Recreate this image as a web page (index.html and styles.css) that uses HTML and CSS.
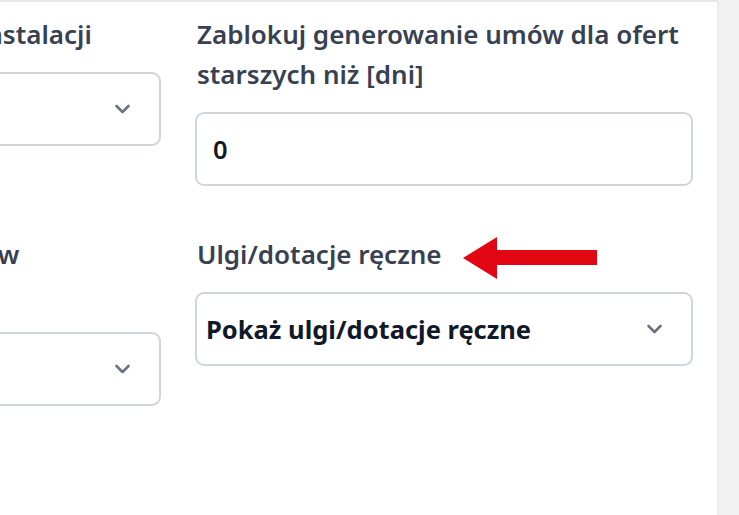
FILE: index.html
```html
<!DOCTYPE html>
<html lang="pl">
<head>
<meta charset="utf-8">
<link rel="stylesheet" href="styles.css">
</head>
<body>
<div class="page">
  <main class="panel">
    <form class="form-grid">
      <div class="field">
        <label class="label">Domyślne typy montażu instalacji</label>
        <div class="select"><span class="select-value"></span><svg class="chevron" viewBox="0 0 16 10"><path d="M2 2l6 6 6-6"/></svg></div>
      </div>
      <div class="field">
        <label class="label">Zablokuj generowanie umów dla ofert starszych niż [dni]</label>
        <div class="input">0</div>
      </div>
      <div class="field">
        <label class="label">Rabaty dla nowych klientów indywidualnych</label>
        <div class="select"><span class="select-value"></span><svg class="chevron" viewBox="0 0 16 10"><path d="M2 2l6 6 6-6"/></svg></div>
      </div>
      <div class="field">
        <div class="label-row">
          <label class="label">Ulgi/dotacje ręczne</label>
          <svg class="arrow" viewBox="0 0 134 42"><polygon points="0,21 34,0 34,13 134,13 134,28 34,28 34,42"/></svg>
        </div>
        <div class="select"><span class="select-value">Pokaż ulgi/dotacje ręczne</span><svg class="chevron" viewBox="0 0 16 10"><path d="M2 2l6 6 6-6"/></svg></div>
      </div>
    </form>
  </main>
  <aside class="side"></aside>
</div>
</body>
</html>
```
FILE: styles.css
```css
html, body {
  margin: 0;
  padding: 0;
  height: 100%;
}
body {
  background: #f1f1f1;
  font-family: "Noto Sans", "Open Sans", sans-serif;
  overflow: hidden;
}
.page {
  display: flex;
  height: 515px;
}
.panel {
  width: 718px;
  flex: none;
  background: #ffffff;
  border-top: 2px solid #e5e7eb;
  border-right: 1px solid #e5e7eb;
  overflow: hidden;
  box-sizing: border-box;
}
.side {
  flex: 1;
  background: #f1f1f1;
}
.form-grid {
  display: grid;
  grid-template-columns: 498px 498px;
  column-gap: 34px;
  row-gap: 48px;
  margin: 12px 0 0 -337px;
  align-items: start;
}
.field {
  display: flex;
  flex-direction: column;
}
.label-row {
  display: flex;
  align-items: center;
  position: relative;
}
.label {
  display: block;
  font-size: 26px;
  line-height: 40px;
  font-weight: 600;
  color: #374151;
  padding-left: 2px;
  margin-bottom: 18px;
}
.arrow {
  position: absolute;
  left: 268px;
  top: 3px;
  width: 134px;
  height: 42px;
  fill: #e20613;
}
.select, .input {
  box-sizing: border-box;
  height: 74px;
  border: 2px solid #d1d5db;
  border-radius: 9px;
  display: flex;
  align-items: center;
  background: #fff;
  font-size: 25.5px;
  font-weight: 700;
  color: #111827;
}
.select {
  padding: 0 28px 0 9px;
  justify-content: space-between;
}
.input {
  padding-left: 16px;
  font-weight: 600;
}
.chevron {
  width: 17px;
  height: 10px;
  fill: none;
  stroke: #6b7280;
  stroke-width: 2.6;
  stroke-linecap: round;
  stroke-linejoin: round;
}
```
